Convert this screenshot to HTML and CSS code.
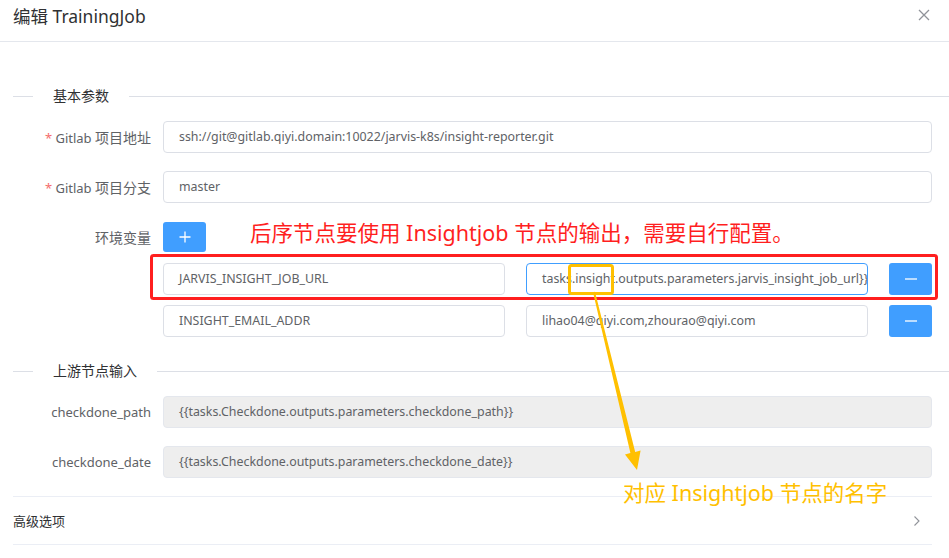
FILE: index.html
```html
<!DOCTYPE html>
<html lang="zh">
<head>
<meta charset="utf-8">
<title>编辑 TrainingJob</title>
<link rel="stylesheet" href="styles.css">
</head>
<body>
<div class="dialog">
  <header class="dlg-header">
    <span class="dlg-title">编辑 TrainingJob</span>
    <span class="dlg-close"><svg width="12" height="12" viewBox="0 0 12 12"><path d="M1 1L11 11M11 1L1 11" stroke="#909399" stroke-width="1.3" fill="none"/></svg></span>
  </header>
  <div class="dlg-body">
    <div class="section-divider"><span class="sd-text">基本参数</span></div>
    <div class="form-item">
      <div class="label"><span class="req">*</span> Gitlab <span class="cjk">项目地址</span></div>
      <div class="control"><div class="input">ssh://git@gitlab.qiyi.domain:10022/jarvis-k8s/insight-reporter.git</div></div>
    </div>
    <div class="form-item">
      <div class="label"><span class="req">*</span> Gitlab <span class="cjk">项目分支</span></div>
      <div class="control"><div class="input">master</div></div>
    </div>
    <div class="form-item env-head">
      <div class="label"><span class="cjk">环境变量</span></div>
      <div class="control"><span class="btn btn-add"><svg width="12" height="12" viewBox="0 0 12 12"><path d="M6 0.5V11.5M0.5 6H11.5" stroke="#fff" stroke-width="1.3" fill="none"/></svg></span></div>
    </div>
    <div class="env-row">
      <div class="input env-input">JARVIS_INSIGHT_JOB_URL</div>
      <div class="input env-input focus">tasks.insight.outputs.parameters.jarvis_insight_job_url}}</div>
      <span class="btn btn-del"><svg width="12" height="2" viewBox="0 0 12 2"><path d="M0 1H12" stroke="#fff" stroke-width="1.3" fill="none"/></svg></span>
    </div>
    <div class="env-row">
      <div class="input env-input">INSIGHT_EMAIL_ADDR</div>
      <div class="input env-input">lihao04@qiyi.com,zhourao@qiyi.com</div>
      <span class="btn btn-del"><svg width="12" height="2" viewBox="0 0 12 2"><path d="M0 1H12" stroke="#fff" stroke-width="1.3" fill="none"/></svg></span>
    </div>
    <div class="section-divider second"><span class="sd-text">上游节点输入</span></div>
    <div class="form-item">
      <div class="label">checkdone_path</div>
      <div class="control"><div class="input disabled">{{tasks.Checkdone.outputs.parameters.checkdone_path}}</div></div>
    </div>
    <div class="form-item">
      <div class="label">checkdone_date</div>
      <div class="control"><div class="input disabled">{{tasks.Checkdone.outputs.parameters.checkdone_date}}</div></div>
    </div>
    <div class="collapse">
      <span class="collapse-title">高级选项</span>
      <svg class="chevron" width="6" height="10" viewBox="0 0 6 10"><path d="M0.5 0.5L5 5L0.5 9.5" stroke="#909399" stroke-width="1.1" fill="none"/></svg>
    </div>
  </div>

  <svg class="annot-svg" width="949" height="558" viewBox="0 0 949 558">
    <rect x="151.5" y="255.5" width="785" height="43" rx="2" fill="none" stroke="#ff1f1f" stroke-width="3"/>
    <rect x="569.5" y="265.5" width="43" height="28" rx="2" fill="none" stroke="#ffc000" stroke-width="3"/>
    <polygon points="593,292.2 595,291.8 635.2,451.9 640.6,450.6 637,470 625,454.4 630.4,453.1" fill="#ffc000"/>
  </svg>
  <div class="annot annot-red">后序节点要使用 Insightjob 节点的输出，需要自行配置。</div>
  <div class="annot annot-yellow">对应 Insightjob 节点的名字</div>
</div>
</body>
</html>
```

FILE: styles.css
```css
* { box-sizing: border-box; }
html, body { margin: 0; padding: 0; background: #fff; }
body {
  font-family: "Noto Sans", "Noto Sans CJK SC", sans-serif;
  font-size: 13px;
  color: #606266;
}
.dialog {
  position: relative;
  width: 949px;
  height: 558px;
  overflow: hidden;
}
.dlg-header {
  height: 42px;
  border-bottom: 1px solid #e4e7ed;
  padding: 0 13px 9px;
  display: flex;
  align-items: center;
  justify-content: space-between;
}
.dlg-title {
  font-size: 17.5px;
  line-height: 32px;
  color: #303133;
}
.dlg-close {
  display: flex;
  margin-right: 6px;
  margin-top: -2px;
}
.dlg-body {
  padding: 44px 17px 0 13px;
}
.section-divider {
  height: 20px;
  display: flex;
  align-items: center;
  margin-right: -17px;
  margin-bottom: 15px;
}
.section-divider::before {
  content: "";
  width: 20px;
  height: 1px;
  background: #dcdfe6;
}
.section-divider::after {
  content: "";
  flex: 1;
  height: 1px;
  background: #dcdfe6;
}
.section-divider.second { margin-top: 24px; }
.sd-text {
  padding: 0 20px;
  font-size: 14px;
  color: #303133;
  line-height: 20px;
}
.form-item {
  display: flex;
  align-items: center;
  height: 32px;
  margin-bottom: 18px;
}
.form-item.env-head { margin-bottom: 10px; }
.label {
  width: 150px;
  flex: none;
  text-align: right;
  padding-right: 12px;
  color: #606266;
  white-space: nowrap;
}
.cjk { font-size: 14px; }
.req { color: #f56c6c; }
.control { flex: 1; display: flex; align-items: center; }
.input {
  height: 32px;
  line-height: 30px;
  border: 1px solid #dcdfe6;
  border-radius: 4px;
  padding: 0 15px;
  font-size: 12.4px;
  color: #606266;
  white-space: nowrap;
  overflow: hidden;
  flex: 1;
}
.input.focus { border-color: #409eff; }
.input.disabled {
  background: #eeeeee;
  border-color: #e4e7ed;
}
.btn {
  display: flex;
  align-items: center;
  justify-content: center;
  background: #409eff;
  border-radius: 3px;
  flex: none;
}
.btn-add { width: 43px; height: 30px; }
.btn-del { width: 43px; height: 32px; }
.env-row {
  display: flex;
  gap: 21px;
  margin-left: 150px;
  height: 32px;
  margin-bottom: 10px;
}
.env-input { flex: none; width: 342px; }
.collapse {
  height: 49px;
  border-top: 1px solid #ebeef5;
  border-bottom: 1px solid #ebeef5;
  display: flex;
  align-items: center;
  justify-content: space-between;
  padding-right: 12px;
}
.collapse-title { color: #303133; font-size: 13px; }
.annot-svg {
  position: absolute;
  left: 0;
  top: 0;
  pointer-events: none;
}
.annot {
  position: absolute;
  font-size: 21.5px;
  line-height: 30px;
  white-space: nowrap;
}
.annot-red { left: 250px; top: 218px; color: #ff1f1f; }
.annot-yellow { left: 623px; top: 478px; color: #ffc000; }
```
